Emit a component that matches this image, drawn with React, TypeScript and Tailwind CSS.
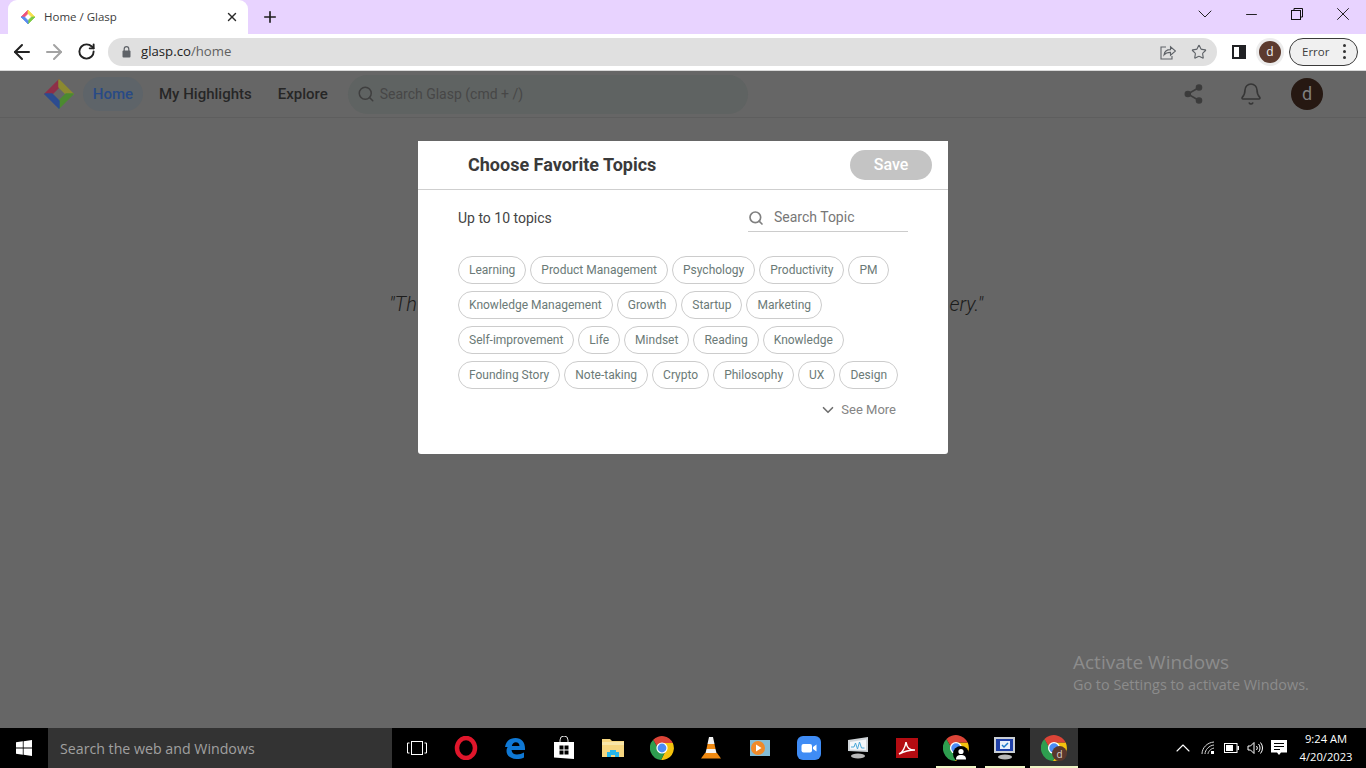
import { ArrowLeft, ArrowRight, Bell, ChevronDown, ChevronUp, Minus, Plus, RotateCw, Search, Star, X } from "lucide-react";

const chipRows = [
  "Learning", "Product Management", "Psychology", "Productivity", "PM",
  "Knowledge Management", "Growth", "Startup", "Marketing",
  "Self-improvement", "Life", "Mindset", "Reading", "Knowledge",
  "Founding Story", "Note-taking", "Crypto", "Philosophy", "UX", "Design",
];

function GlaspLogo({ size, bright }: { size: number; bright?: boolean }) {
  const c = bright
    ? ["#f0527a", "#f6e04e", "#7ccb45", "#5a8cf0"]
    : ["#8e2f48", "#8c8a30", "#4c8a30", "#2c4c90"];
  return (
    <svg width={size} height={size} viewBox="0 0 32 32" strokeLinejoin="round">
      <polygon points="2,16 16,2 16,9 9,16" fill={c[0]} stroke={c[0]} strokeWidth="1.500" />
      <polygon points="16,2 30,16 23,16 16,9" fill={c[1]} stroke={c[1]} strokeWidth="1.500" />
      <polygon points="30,16 16,30 16,23 23,16" fill={c[2]} stroke={c[2]} strokeWidth="1.500" />
      <polygon points="16,30 2,16 9,16 16,23" fill={c[3]} stroke={c[3]} strokeWidth="1.500" />
    </svg>
  );
}

function Chrome({ size = 26 }: { size?: number }) {
  return (
    <svg width={size} height={size} viewBox="0 0 24 24">
      <path d="M12 7L22.8 7A12 12 0 0 1 11 24L16 14Z" fill="#f4c20d" />
      <path d="M8 12L3.2 3.8A12 12 0 0 0 11 24L16 14Z" fill="#2e9e4f" />
      <path d="M12 7L22.8 7A12 12 0 0 0 3.2 3.8L8 12Z" fill="#db4437" />
      <circle cx="12" cy="12" r="5.6" fill="#fff" />
      <circle cx="12" cy="12" r="4.4" fill="#4a8bf5" />
    </svg>
  );
}

function ChromeBadge({ kind }: { kind: "user" | "d" }) {
  return (
    <div className="relative h-[26px] w-[26px]">
      <Chrome />
      {kind === "user" ? (
        <div className="absolute left-[10px] top-[11px] flex h-[16px] w-[16px] items-center justify-center rounded-full bg-black">
          <svg width="12" height="12" viewBox="0 0 12 12" fill="#fff">
            <circle cx="6" cy="3.5" r="2.6" />
            <path d="M1 11.5C1 8 3 7 6 7s5 1 5 4.5Z" />
          </svg>
        </div>
      ) : (
        <div className="absolute left-[11px] top-[11px] flex h-[15px] w-[15px] items-center justify-center rounded-full bg-[#5a382c] font-['Open_Sans',sans-serif] text-[10px] leading-none text-[#d8d0cc]">
          d
        </div>
      )}
    </div>
  );
}

function TaskIcon({ children, line }: { children: React.ReactNode; line?: boolean }) {
  return (
    <div className="relative flex h-[40px] w-[49px] items-center justify-center">
      {children}
      {line && <div className="absolute bottom-0 left-[5px] h-[2px] w-[40px] bg-[#eef5c6]" />}
    </div>
  );
}

function Quote() {
  return (
    <div className="ml-[389px] mt-[172px] flex w-[594px] justify-between font-['Roboto',sans-serif] text-[20px] font-light italic leading-[28px] text-[#1c1c1c]">
      <span>"Th</span>
      <span>ery."</span>
    </div>
  );
}

export default function App() {
  return (
    <div className="flex h-[768px] w-[1366px] flex-col overflow-hidden bg-[#666666] font-['Roboto',sans-serif]">
      {/* Tab strip */}
      <div className="flex h-[34px] shrink-0 items-end bg-[#e8d3ff] pl-[8px]">
        <div className="flex h-[34px] w-[240px] items-center rounded-t-[9px] bg-white pl-[12px] pr-[9px]">
          <GlaspLogo size={16} bright />
          <span className="ml-[8px] flex-1 font-['Open_Sans',sans-serif] text-[11.5px] text-[#3c3c3c]">Home / Glasp</span>
          <X size={14} strokeWidth={2.4} className="text-[#2a2a2a]" />
        </div>
        <div className="ml-[13px] flex h-[34px] w-[18px] items-center justify-center">
          <Plus size={18} strokeWidth={2.2} className="text-[#1f1f1f]" />
        </div>
        <div className="flex-1" />
        <div className="flex h-[28px] items-center self-start">
          <div className="flex w-[46px] justify-center">
            <ChevronDown size={24} strokeWidth={1} className="text-[#222]" />
          </div>
          <div className="flex w-[46px] justify-center">
            <Minus size={17} strokeWidth={1.3} className="text-[#111]" />
          </div>
          <div className="flex w-[46px] justify-center">
            <svg width="12" height="12" viewBox="0 0 12 12" fill="none" stroke="#111" strokeWidth="1">
              <rect x="0.5" y="2.5" width="9" height="9" />
              <path d="M3 2.5V.5h8.5V9H9.5" />
            </svg>
          </div>
          <div className="flex w-[46px] justify-center">
            <X size={22} strokeWidth={1} className="text-[#111]" />
          </div>
        </div>
      </div>

      {/* Toolbar */}
      <div className="flex h-[37px] shrink-0 items-center border-b border-[#d8d8d8] bg-white pb-[1px]">
        <div className="flex w-[108px] items-center pl-[6px]">
          <div className="flex w-[32px] justify-center"><ArrowLeft size={24} strokeWidth={2} className="text-[#222]" /></div>
          <div className="flex w-[32px] justify-center"><ArrowRight size={24} strokeWidth={2} className="text-[#a3a3a3]" /></div>
          <div className="flex w-[32px] justify-center"><RotateCw size={19} strokeWidth={2.4} className="text-[#222]" /></div>
        </div>
        <div className="flex h-[28px] w-[1109px] items-center rounded-full bg-[#e0e0e0] pl-[14px] pr-[10px]">
          <svg width="9" height="12" viewBox="0 0 9 12" fill="none">
            <rect x="0.500" y="4.500" width="8" height="7" rx="1" fill="#5f6368" />
            <path d="M2.200 5V3a2.300 2.300 0 0 1 4.600 0v2" stroke="#5f6368" strokeWidth="1.200" />
          </svg>
          <span className="ml-[10px] flex-1 pt-[1px] font-['Open_Sans',sans-serif] text-[13.2px]">
            <span className="text-[#222]">glasp.co</span>
            <span className="text-[#606060]">/home</span>
          </span>
          <svg width="16" height="16" viewBox="0 0 16 16" fill="none" stroke="#5f6368" strokeWidth="1.1" className="mr-[15px]">
            <path d="M6 3H1v12h11v-3" />
            <path d="M4 11c.4-3.6 3.2-5.4 6.5-5.4V2.800L15.500 7l-5 4.200V8.400C8 8.400 5.600 9 4 11Z" />
          </svg>
          <Star size={16} strokeWidth={1.7} className="text-[#5f6368]" />
        </div>
        <div className="ml-[15px] flex h-[14px] w-[14px] justify-end border-2 border-[#202124] bg-white">
          <div className="h-full w-[5px] bg-[#202124]" />
        </div>
        <div className="ml-[10px] flex h-[28px] w-[28px] items-center justify-center rounded-full bg-[#ececec]">
          <div className="flex h-[22px] w-[22px] items-center justify-center rounded-full bg-[#5c3a2e] font-['Open_Sans',sans-serif] text-[12px] leading-none text-[#eee]">d</div>
        </div>
        <div className="ml-[5px] flex h-[28px] w-[69px] items-center rounded-full border border-[#3a3a3a] bg-[#f0f0f0] pl-[12px]">
          <span className="flex-1 font-['Open_Sans',sans-serif] text-[11.5px] text-[#3c3c3c]">Error</span>
          <div className="mr-[11px] flex flex-col gap-[3px]">
            <div className="h-[3px] w-[3px] rounded-full bg-[#333]" />
            <div className="h-[3px] w-[3px] rounded-full bg-[#333]" />
            <div className="h-[3px] w-[3px] rounded-full bg-[#333]" />
          </div>
        </div>
      </div>

      {/* Page */}
      <div className="relative flex-1 bg-[#666666]">
        <header className="flex h-[47px] items-center border-b border-[#5e5e5e] pl-[43px] pr-[43px]">
          <GlaspLogo size={32} />
          <div className="ml-[8px] flex h-[34px] w-[60px] items-center justify-center rounded-full bg-[#5e6469] text-[15px] font-medium text-[#284a86]">Home</div>
          <span className="ml-[16px] text-[15px] font-medium text-[#262626]">My Highlights</span>
          <span className="ml-[26px] text-[15px] font-medium text-[#262626]">Explore</span>
          <div className="ml-[20px] flex h-[39px] w-[400px] items-center rounded-full bg-[#5f6362] pl-[9px]">
            <Search size={18} strokeWidth={2} className="text-[#3f3f3f]" />
            <span className="ml-[5px] text-[14px] text-[#474747]">Search Glasp (cmd + /)</span>
          </div>
          <div className="flex-1" />
          <svg width="20" height="20" viewBox="0 0 20 20" fill="#3c3c3c" stroke="#3c3c3c" strokeWidth="1.6">
            <circle cx="15" cy="3.500" r="2.500" />
            <circle cx="3.800" cy="10" r="2.500" />
            <circle cx="15" cy="16.500" r="2.500" />
            <path d="M15 3.500 3.800 10 15 16.500" fill="none" />
          </svg>
          <Bell size={24} strokeWidth={1.6} className="ml-[35px] text-[#363636]" />
          <div className="ml-[28px] flex h-[32px] w-[32px] items-center justify-center rounded-full bg-[#261812] text-[18px] leading-none text-[#7f7f7f]">d</div>
        </header>

        <Quote />

        {/* Modal */}
        <div className="absolute left-[418px] top-[70px] h-[313px] w-[530px] rounded-b-[3px] bg-white">
          <div className="flex h-[49px] items-center border-b border-[#cfcfcf] pl-[50px] pr-[16px]">
            <h2 className="mb-[2px] flex-1 text-[18px] font-bold text-[#3a3a3a]">Choose Favorite Topics</h2>
            <button className="h-[30px] w-[82px] rounded-full bg-[#c4c4c4] text-[16px] font-medium text-white">Save</button>
          </div>
          <div className="px-[40px] pt-[14px]">
            <div className="flex items-center justify-between">
              <span className="text-[14px] text-[#444444]">Up to 10 topics</span>
              <div className="flex h-[28px] w-[160px] items-center border-b border-[#cccccc]">
                <Search size={16} strokeWidth={2.5} className="text-[#808080]" />
                <span className="ml-[10px] text-[14px] text-[#777777]">Search Topic</span>
              </div>
            </div>
            <div className="mt-[24px] flex flex-wrap gap-x-[4px] gap-y-[7px]">
              {chipRows.map((c) => (
                <div key={c} className="flex h-[28px] items-center rounded-full border border-[#cccccc] px-[10px] text-[12px] text-[#6b7a77]">
                  {c}
                </div>
              ))}
            </div>
            <div className="mt-[11px] flex h-[20px] items-center justify-end pr-[12px]">
              <ChevronDown size={18} strokeWidth={2.2} className="text-[#6f6f6f]" />
              <span className="ml-[4px] text-[13px] text-[#858585]">See More</span>
            </div>
          </div>
        </div>

        {/* Watermark */}
        <div className="absolute left-[1073px] top-[578px] font-['Open_Sans',sans-serif] text-[#8c8c8c]">
          <div className="text-[19px] leading-[26px]">Activate Windows</div>
          <div className="text-[14.4px] leading-[20px]">Go to Settings to activate Windows.</div>
        </div>
      </div>

      {/* Taskbar */}
      <div className="flex h-[40px] shrink-0 items-center bg-black">
        <div className="flex h-[40px] w-[48px] items-center justify-center">
          <svg width="16" height="16" viewBox="0 0 16 16" fill="#fff">
            <path d="M0 2.300 6.800 1.300V7.600H0ZM7.600 1.200 16 0V7.600H7.600ZM0 8.400H6.800V14.700L0 13.700ZM7.600 8.400H16V16L7.600 14.800Z" />
          </svg>
        </div>
        <div className="flex h-[40px] w-[344px] items-center bg-[#333333] pl-[12px] pt-[1px] font-['Open_Sans',sans-serif] text-[14.2px] text-[#a0a0a0]">
          Search the web and Windows
        </div>
        <TaskIcon>
          <svg width="20" height="14" viewBox="0 0 20 14" fill="none" stroke="#fff" strokeWidth="1">
            <rect x="4.500" y="0.500" width="11" height="13" />
            <path d="M2.500 2H.5v10h2M17.500 2h2v10h-2" />
          </svg>
        </TaskIcon>
        <TaskIcon>
          <svg width="24" height="24" viewBox="0 0 24 24">
            <ellipse cx="12" cy="12" rx="9" ry="10" fill="none" stroke="#e0162b" strokeWidth="4.500" />
          </svg>
        </TaskIcon>
        <TaskIcon>
          <svg width="22" height="22" viewBox="0 0 22 22" fill="#0f78d4">
            <path d="M1 10C2 4 6 1 11.500 1 18 1 21.500 6 21 13H7.500c.3 3 2.500 4.500 5.500 4.500 2.500 0 5-.8 7-2v5c-2 1-4.500 1.500-7.500 1.500C6 22 2.500 18 2.500 14c0-3 1.500-5 4-6.500C5.500 9 5 10 5 10.500 4 10 2.500 10 1 10ZM7.800 9h7.700c0-2.500-1.500-3.800-3.700-3.800-2 0-3.500 1.500-4 3.800Z" />
          </svg>
        </TaskIcon>
        <TaskIcon>
          <svg width="22" height="24" viewBox="0 0 22 24">
            <path d="M7 6V4a4 4 0 0 1 8 0v2" fill="none" stroke="#ddd" strokeWidth="1" />
            <path d="M1 6H21V23L1 21.500Z" fill="#fff" />
            <path d="M6.500 9.500h4v4h-4zM11.500 9.500h4v4h-4zM6.500 14.500h4v4h-4zM11.500 14.500h4v4h-4z" fill="#000" />
          </svg>
        </TaskIcon>
        <TaskIcon>
          <svg width="24" height="20" viewBox="0 0 24 20">
            <path d="M1 1h8l2 2h12v16H1Z" fill="#f6d680" />
            <path d="M1 4h22v3H1Z" fill="#f9e6a8" />
            <path d="M6 19v-5h3v-2h6v2h3v5h-4v-2h-4v2Z" fill="#27b7ea" />
          </svg>
        </TaskIcon>
        <TaskIcon><Chrome size={24} /></TaskIcon>
        <TaskIcon>
          <svg width="22" height="24" viewBox="0 0 22 24">
            <path d="M9 1h4l1.500 7h-7Z" fill="#f3f3f3" />
            <path d="M7.500 8h7l1 5h-9Z" fill="#f08a12" />
            <path d="M6.500 13h9l1 4h-11Z" fill="#f3f3f3" />
            <path d="M5 17h12l4 5.500H1Z" fill="#f08a12" />
          </svg>
        </TaskIcon>
        <TaskIcon>
          <svg width="22" height="20" viewBox="0 0 22 20">
            <rect x="1" y="2" width="20" height="16" fill="#84bcd6" />
            <circle cx="9" cy="10" r="7" fill="#f08a2a" />
            <path d="M7 6.500 12.500 10 7 13.500Z" fill="#fff" />
          </svg>
        </TaskIcon>
        <TaskIcon>
          <svg width="24" height="24" viewBox="0 0 24 24">
            <rect width="24" height="24" rx="6" fill="#3f8cf5" />
            <rect x="4.500" y="8" width="10.500" height="8.500" rx="2" fill="#fff" />
            <path d="M16 11l3.500-2.500v7L16 13Z" fill="#fff" />
          </svg>
        </TaskIcon>
        <TaskIcon>
          <svg width="24" height="24" viewBox="0 0 24 24">
            <path d="M2 4 22 1V16L2 15Z" fill="#cfd4d8" />
            <path d="M4 6 20 3.500V14L4 13.500Z" fill="#f4f7fa" />
            <path d="M5 11h3l1.500-4 2 6 2-7 2 6h3" fill="none" stroke="#4aa8d8" strokeWidth="1" />
            <ellipse cx="12" cy="20" rx="7" ry="2.500" fill="#b8b8b8" />
          </svg>
        </TaskIcon>
        <TaskIcon>
          <svg width="22" height="20" viewBox="0 0 22 20">
            <rect width="22" height="20" fill="#b40c12" />
            <path d="M3 16c4-2 6-6 7-12 1 6 3 8 9 8-5 0-10 1-16 4Z" fill="none" stroke="#fff" strokeWidth="1.500" />
          </svg>
        </TaskIcon>
        <TaskIcon line><ChromeBadge kind="user" /></TaskIcon>
        <TaskIcon line>
          <svg width="24" height="24" viewBox="0 0 24 24">
            <rect x="1" y="1" width="21" height="16" fill="#c9ced4" />
            <rect x="3" y="3" width="17" height="12" fill="#1e3fa8" />
            <rect x="7" y="5" width="10" height="8" fill="#eaf0fa" />
            <path d="M9 9l2 2 4-4" fill="none" stroke="#1e78c8" strokeWidth="1.500" />
            <ellipse cx="12" cy="21" rx="7" ry="2.500" fill="#b8b8b8" />
          </svg>
        </TaskIcon>
        <div className="relative ml-[1px] flex h-[40px] w-[48px] items-center justify-center bg-[#333333]">
          <ChromeBadge kind="d" />
          <div className="absolute bottom-0 left-0 h-[2px] w-[48px] bg-[#eef5c6]" />
        </div>

        <div className="flex-1" />
        <div className="flex h-[40px] items-center text-white">
          <ChevronUp size={24} strokeWidth={1.1} className="-mx-[3px]" />
          <svg width="14" height="14" viewBox="0 0 14 14" fill="none" stroke="#d8d8d8" strokeWidth="1" className="ml-[9px]">
            <path d="M1 13C1 7 6 1.500 13 1M4 13C4 9 8 4.500 13 4M7 13c0-2 2-5 6-6" />
            <rect x="10" y="10" width="3" height="3" fill="#fff" stroke="none" />
          </svg>
          <svg width="15" height="10" viewBox="0 0 15 10" className="ml-[9px]">
            <rect x="0.500" y="0.500" width="12.500" height="9" fill="none" stroke="#fff" />
            <rect x="2" y="2" width="7" height="6" fill="#fff" />
            <rect x="13.500" y="3" width="1.500" height="4" fill="#fff" />
          </svg>
          <svg width="16" height="14" viewBox="0 0 16 14" fill="none" stroke="#fff" strokeWidth="1" className="ml-[8px]">
            <path d="M1 5H3.500L7 1.500V12.500L3.500 9H1Z" />
            <path d="M9.500 5a3 3 0 0 1 0 4M11.500 3a6 6 0 0 1 0 8M13.500 1.500a8.500 8.500 0 0 1 0 11" />
          </svg>
          <svg width="16" height="16" viewBox="0 0 16 16" className="ml-[8px]">
            <path d="M0 0H16V12.500H10L8 15 6 12.500H0Z" fill="#fff" />
            <path d="M3 3.500H13M3 6.500H13M3 9.500H9" stroke="#000" strokeWidth="1" />
          </svg>
          <div className="ml-[13px] mr-[14px] flex w-[52px] flex-col items-center font-['Open_Sans',sans-serif] text-[11.2px] leading-[18px] text-white">
            <span className="whitespace-nowrap">9:24 AM</span>
            <span className="whitespace-nowrap">4/20/2023</span>
          </div>
        </div>
      </div>
    </div>
  );
}
